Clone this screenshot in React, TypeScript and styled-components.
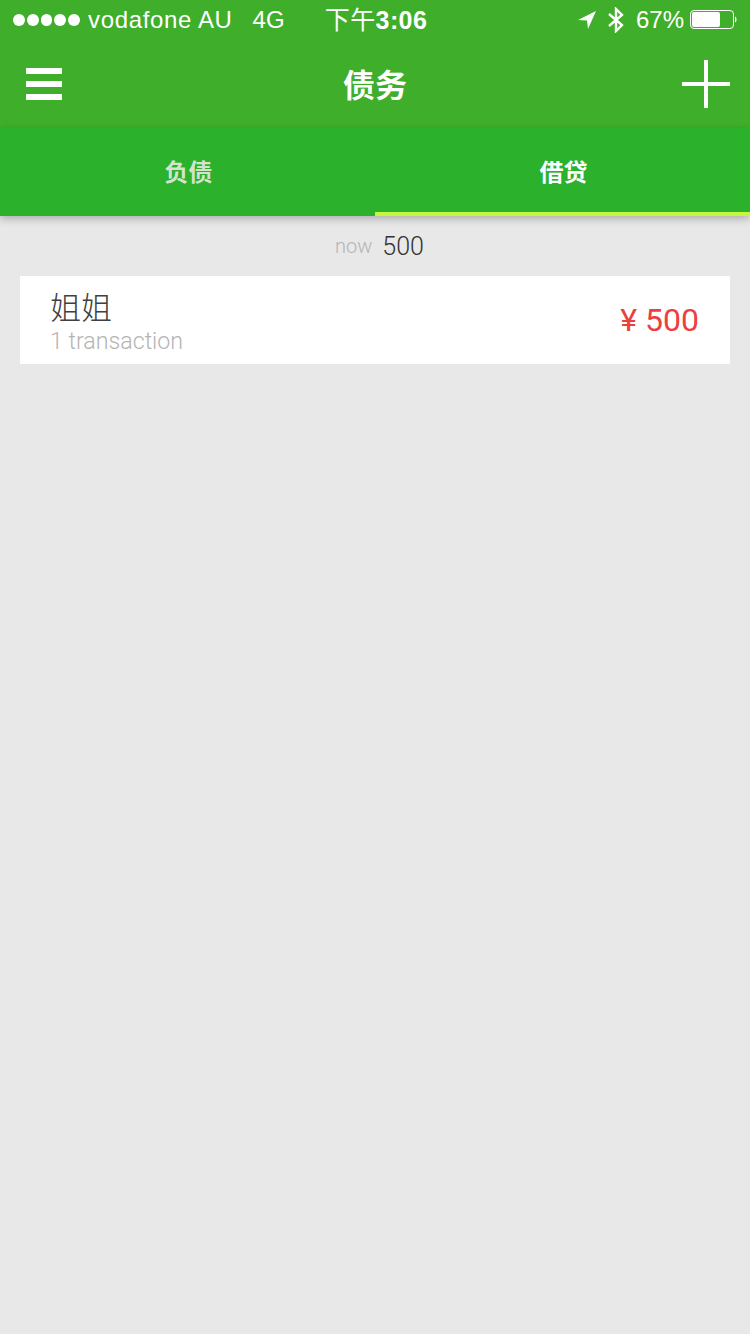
import styled, { createGlobalStyle } from "styled-components"

const GlobalStyle = createGlobalStyle`
    html, body {
        margin: 0;
        padding: 0;
        background: #e8e8e8;
    }
    * {
        box-sizing: border-box;
    }
`

const CJK = `"Liberation Sans", "Noto Sans CJK SC", sans-serif`
const LIGHT = `Roboto, "Noto Sans CJK SC", sans-serif`

const Page = styled.div`
    width: 750px;
    height: 1334px;
    background: #e8e8e8;
    font-family: ${CJK};
    overflow: hidden;
`

const Header = styled.header`
    background: #3fae2a;
    height: 128px;
`

const StatusBar = styled.div`
    height: 40px;
    padding: 0 13px;
    display: grid;
    grid-template-columns: 1fr auto 1fr;
    align-items: center;
    color: #fff;
    font-size: 24px;
`

const StatusLeft = styled.div`
    display: flex;
    align-items: center;
`

const Signal = styled.div`
    display: flex;
    gap: 2px;
    margin-right: 8px;
`

const Dot = styled.span`
    width: 11.8px;
    height: 11.8px;
    border-radius: 50%;
    background: #fff;
`

const Carrier = styled.span`
    margin-right: 20px;
    letter-spacing: 0.65px;
`

const Clock = styled.div`
    font-weight: 700;
    font-size: 25px;
    letter-spacing: 0.4px;
    line-height: 40px;
    height: 40px;
    margin-left: 2px;
`

const ClockPrefix = styled.span`
    font-weight: 400;
`

const StatusRight = styled.div`
    display: flex;
    align-items: center;
    justify-content: flex-end;
`

const Percent = styled.span`
    margin: 0 6px 0 10px;
`

const NavBar = styled.div`
    height: 88px;
    padding: 0 20px 0 26px;
    display: flex;
    align-items: center;
    justify-content: space-between;
`

const Burger = styled.div`
    width: 36px;
    height: 32px;
    margin-right: 6px;
    display: flex;
    flex-direction: column;
    justify-content: space-between;
`

const BurgerBar = styled.span`
    height: 6px;
    background: #fff;
`

const Title = styled.h1`
    margin: -2px 0 0;
    color: #fff;
    font-size: 32px;
    font-weight: 700;
`

const Tabs = styled.nav`
    height: 88px;
    display: flex;
    background: #2bb12b;
    box-shadow: 0 3px 8px rgba(0, 0, 0, 0.25);
`

const Tab = styled.div<{ $active?: boolean }>`
    flex: 1;
    padding-left: 2px;
    display: flex;
    align-items: center;
    justify-content: center;
    font-size: 24px;
    font-weight: 700;
    color: ${props => props.$active ? "#fff" : "#d2e4cf"};
    border-bottom: 4px solid ${props => props.$active ? "#c6f73f" : "transparent"};
`

const Summary = styled.div`
    height: 60px;
    padding-left: 9px;
    display: flex;
    align-items: center;
    justify-content: center;
    gap: 10px;
    font-family: ${LIGHT};
    font-weight: 300;
`

const NowLabel = styled.span`
    font-size: 20px;
    color: #b5b5b5;
`

const NowValue = styled.span`
    font-size: 25px;
    color: #333;
`

const Card = styled.div`
    margin: 0 20px;
    height: 88px;
    background: #fff;
    padding: 0 31px 0 30px;
    display: flex;
    align-items: center;
    justify-content: space-between;
    font-family: ${LIGHT};
    font-weight: 300;
`

const Person = styled.div`
    padding-top: 4px;
`

const Name = styled.div`
    font-size: 31px;
    line-height: 39px;
    color: #404040;
`

const Count = styled.div`
    font-size: 23.2px;
    line-height: 27px;
    color: #b4b4b4;
`

const Amount = styled.div`
    font-size: 32px;
    font-weight: 400;
    color: #ee3f3f;
`

export default function App() {
    return (
        <Page>
            <GlobalStyle />
            <Header>
                <StatusBar>
                    <StatusLeft>
                        <Signal>
                            {[0, 1, 2, 3, 4].map(i => <Dot key={i} />)}
                        </Signal>
                        <Carrier>vodafone AU</Carrier>
                        <span>4G</span>
                    </StatusLeft>
                    <Clock><ClockPrefix>下午</ClockPrefix>3:06</Clock>
                    <StatusRight>
                        <svg width="20" height="20" viewBox="0 0 20 20">
                            <path d="M19 1 L1 10 L10 10.5 L11 19 Z" fill="#fff" />
                        </svg>
                        <svg width="20" height="26" viewBox="0 0 20 26" style={{ marginLeft: 9 }}>
                            <path d="M3 7 L16 18 L10 24 L10 2 L16 8 L3 19" fill="none" stroke="#fff" strokeWidth="2.4" />
                        </svg>
                        <Percent>67%</Percent>
                        <svg width="47" height="20" viewBox="0 0 47 20">
                            <rect x="0.5" y="0.5" width="43" height="18" rx="3.5" fill="none" stroke="#fff" />
                            <rect x="2" y="2" width="28" height="15" rx="2" fill="#fff" />
                            <path d="M45 6.5 C47 7 47 12 45 12.5 Z" fill="#fff" />
                        </svg>
                    </StatusRight>
                </StatusBar>
                <NavBar>
                    <Burger>
                        <BurgerBar />
                        <BurgerBar />
                        <BurgerBar />
                    </Burger>
                    <Title>债务</Title>
                    <svg width="48" height="48" viewBox="0 0 48 48">
                        <path d="M24 0 V48 M0 24 H48" stroke="#fff" strokeWidth="4" />
                    </svg>
                </NavBar>
            </Header>
            <Tabs>
                <Tab>负债</Tab>
                <Tab $active>借贷</Tab>
            </Tabs>
            <Summary>
                <NowLabel>now</NowLabel>
                <NowValue>500</NowValue>
            </Summary>
            <Card>
                <Person>
                    <Name>姐姐</Name>
                    <Count>1 transaction</Count>
                </Person>
                <Amount>¥ 500</Amount>
            </Card>
        </Page>
    )
}
